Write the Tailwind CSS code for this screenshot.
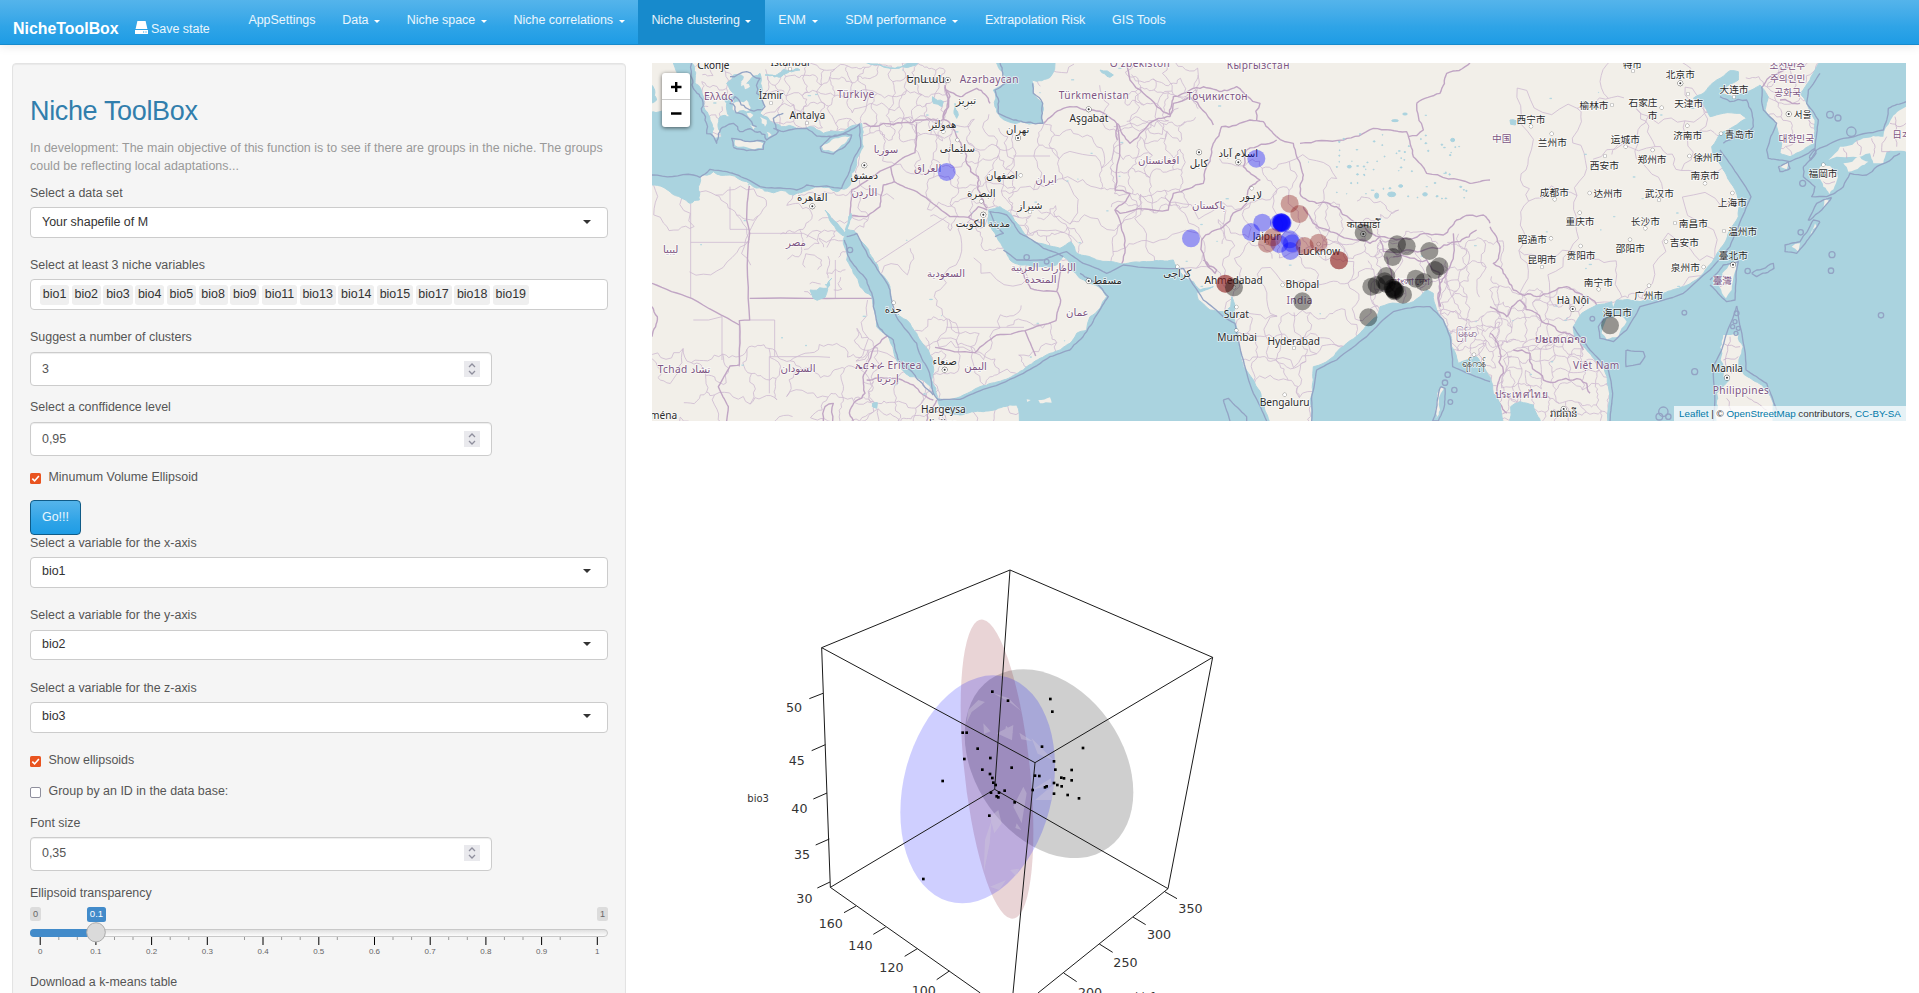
<!DOCTYPE html>
<html lang="en">
<head>
<meta charset="utf-8">
<title>NicheToolBox</title>
<script src="https://cdn.jsdelivr.net/npm/@tailwindcss/browser@4"></script>
</head>
<body class="h-[993px] w-[1919px] overflow-hidden bg-white font-['Liberation_Sans',sans-serif] text-[12.45px] leading-[18px] text-[#555555]">

<nav class="relative flex h-[45px] items-start border-b border-[#178acc] bg-linear-to-b from-[#54b4eb] via-[#2fa4e7] via-60% to-[#1d9ce5] text-white/90 shadow-[0_1px_10px_rgba(0,0,0,0.1)]">
  <div class="flex w-[235px] shrink-0 pl-[13px] pt-[20px]">
    <span class="w-[122px] text-[15.9px] font-bold text-white">NicheToolBox</span>
    <span class="flex gap-[3px]">
      <svg class="mt-[1px] h-[13px] w-[13px]" viewBox="0 0 13 13" fill="#fff"><path d="M2.4 0h8.2L12.4 8H.6z"/><path fill-rule="evenodd" d="M0 9h13v4H0zM8 10.6v1h1.2v-1zM10.4 10.6v1h1.2v-1z"/></svg>
      <span>Save state</span>
    </span>
  </div>
  <ul class="flex h-[44px]">
    <li class="px-[13.4px] pt-[11px]">AppSettings</li>
    <li class="flex px-[13.4px] pt-[11px]">Data<i class="ml-[5.5px] mt-[9px] h-0 w-0 border-x-[3.5px] border-t-[3.5px] border-x-transparent border-t-white"></i></li>
    <li class="flex px-[13.4px] pt-[11px]">Niche space<i class="ml-[5.5px] mt-[9px] h-0 w-0 border-x-[3.5px] border-t-[3.5px] border-x-transparent border-t-white"></i></li>
    <li class="flex px-[13.4px] pt-[11px]">Niche correlations<i class="ml-[5.5px] mt-[9px] h-0 w-0 border-x-[3.5px] border-t-[3.5px] border-x-transparent border-t-white"></i></li>
    <li class="flex h-[45px] bg-[#178acc] px-[13.4px] pt-[11px]">Niche clustering<i class="ml-[5.5px] mt-[9px] h-0 w-0 border-x-[3.5px] border-t-[3.5px] border-x-transparent border-t-white"></i></li>
    <li class="flex px-[13.6px] pt-[11px]">ENM<i class="ml-[6px] mt-[9px] h-0 w-0 border-x-[3.5px] border-t-[3.5px] border-x-transparent border-t-white"></i></li>
    <li class="flex px-[13.6px] pt-[11px]">SDM performance<i class="ml-[6px] mt-[9px] h-0 w-0 border-x-[3.5px] border-t-[3.5px] border-x-transparent border-t-white"></i></li>
    <li class="px-[13.4px] pt-[11px]">Extrapolation Risk</li>
    <li class="px-[13.4px] pt-[11px]">GIS Tools</li>
  </ul>
</nav>

<div class="flex items-start gap-[26px] pl-3 pt-[18px]">
  <aside class="flex h-[960px] w-[614px] shrink-0 flex-col rounded border border-[#e3e3e3] bg-[#f5f5f5] px-[17px] pt-[31px] shadow-[inset_0_1px_1px_rgba(0,0,0,0.05)]">
    <h2 class="h-[44px] text-[27px] leading-[33px] tracking-[-0.35px] text-[#317eac]">Niche ToolBox</h2>
    <p class="h-[45px] tracking-[0.02px] text-[#999999]">In development: The main objective of this function is to see if there are groups in the niche. The groups<br>could be reflecting local adaptations...</p>

    <label>Select a data set</label>
    <div class="mt-[5px] flex h-[31px] items-center justify-between rounded border border-[#cccccc] bg-white pb-[2px] pl-[11px] pr-[16px] text-[#333333]"><span>Your shapefile of M</span><i class="h-0 w-0 border-x-4 border-t-4 border-x-transparent border-t-[#333333]"></i></div>

    <label class="mt-[18px]">Select at least 3 niche variables</label>
    <div class="mt-[5px] flex h-[31px] gap-[2.6px] rounded border border-[#cccccc] bg-white pl-[9px] pt-[5px] text-[#333333]">
      <span class="h-[20px] rounded-[3px] bg-[#efefef] px-[2.8px]">bio1</span><span class="h-[20px] rounded-[3px] bg-[#efefef] px-[2.8px]">bio2</span><span class="h-[20px] rounded-[3px] bg-[#efefef] px-[2.8px]">bio3</span><span class="h-[20px] rounded-[3px] bg-[#efefef] px-[2.8px]">bio4</span><span class="h-[20px] rounded-[3px] bg-[#efefef] px-[2.8px]">bio5</span><span class="h-[20px] rounded-[3px] bg-[#efefef] px-[2.8px]">bio8</span><span class="h-[20px] rounded-[3px] bg-[#efefef] px-[2.8px]">bio9</span><span class="h-[20px] rounded-[3px] bg-[#efefef] px-[2.8px]">bio11</span><span class="h-[20px] rounded-[3px] bg-[#efefef] px-[2.8px]">bio13</span><span class="h-[20px] rounded-[3px] bg-[#efefef] px-[2.8px]">bio14</span><span class="h-[20px] rounded-[3px] bg-[#efefef] px-[2.8px]">bio15</span><span class="h-[20px] rounded-[3px] bg-[#efefef] px-[2.8px]">bio17</span><span class="h-[20px] rounded-[3px] bg-[#efefef] px-[2.8px]">bio18</span><span class="h-[20px] rounded-[3px] bg-[#efefef] px-[2.8px]">bio19</span>
    </div>

    <label class="mt-[18px]">Suggest a number of clusters</label>
    <div class="mt-[6px] flex h-[34px] w-[462px] items-center justify-between rounded border border-[#cccccc] bg-white pb-px pl-[11px] pr-[11px] shadow-[inset_0_1px_1px_rgba(0,0,0,0.075)]"><span>3</span>
      <svg class="h-[16px] w-[16px] bg-[#e9e9ed]" viewBox="0 0 16 16" fill="none" stroke="#8f8f9d" stroke-width="1.3"><path d="M5 6l3-3 3 3M5 10l3 3 3-3"/></svg></div>

    <label class="mt-[12px]">Select a conffidence level</label>
    <div class="mt-[6px] flex h-[34px] w-[462px] items-center justify-between rounded border border-[#cccccc] bg-white pb-px pl-[11px] pr-[11px] shadow-[inset_0_1px_1px_rgba(0,0,0,0.075)]"><span>0,95</span>
      <svg class="h-[16px] w-[16px] bg-[#e9e9ed]" viewBox="0 0 16 16" fill="none" stroke="#8f8f9d" stroke-width="1.3"><path d="M5 6l3-3 3 3M5 10l3 3 3-3"/></svg></div>

    <div class="mt-[12px] flex h-[18px] gap-[7.5px]"><svg class="mt-[5px] h-[11px] w-[11px]" viewBox="0 0 11 11"><rect width="11" height="11" rx="1.6" fill="#e95420"/><path d="M2.3 5.6l2.3 2.3 4.3-5" fill="none" stroke="#fff" stroke-width="1.6"/></svg><span>Minumum Volume Ellipsoid</span></div>

    <button class="mt-[14px] h-[35px] w-[51px] shrink-0 rounded border border-[#105b87] bg-linear-to-b from-[#54b4eb] via-[#2fa4e7] via-60% to-[#1d9ce5] pb-[1px] text-white/90">Go!!!</button>

    <label class="-mt-[1px]">Select a variable for the x-axis</label>
    <div class="mt-[5px] flex h-[31px] items-center justify-between rounded border border-[#cccccc] bg-white pb-[3px] pl-[11px] pr-[16px] text-[#333333]"><span>bio1</span><i class="h-0 w-0 border-x-4 border-t-4 border-x-transparent border-t-[#333333]"></i></div>
    <label class="mt-[18px]">Select a variable for the y-axis</label>
    <div class="mt-[6px] flex h-[30px] items-center justify-between rounded border border-[#cccccc] bg-white pb-[3px] pl-[11px] pr-[16px] text-[#333333]"><span>bio2</span><i class="h-0 w-0 border-x-4 border-t-4 border-x-transparent border-t-[#333333]"></i></div>
    <label class="mt-[19px]">Select a variable for the z-axis</label>
    <div class="mt-[5px] flex h-[31px] items-center justify-between rounded border border-[#cccccc] bg-white pb-[3px] pl-[11px] pr-[16px] text-[#333333]"><span>bio3</span><i class="h-0 w-0 border-x-4 border-t-4 border-x-transparent border-t-[#333333]"></i></div>

    <div class="mt-[18px] flex h-[18px] gap-[7.5px]"><svg class="mt-[5px] h-[11px] w-[11px]" viewBox="0 0 11 11"><rect width="11" height="11" rx="1.6" fill="#e95420"/><path d="M2.3 5.6l2.3 2.3 4.3-5" fill="none" stroke="#fff" stroke-width="1.6"/></svg><span>Show ellipsoids</span></div>
    <div class="mt-[13px] flex h-[18px] gap-[7.5px]"><span class="mt-[5px] h-[11px] w-[11px] rounded-[2px] border border-[#8f8f9d] bg-white"></span><span>Group by an ID in the data base:</span></div>

    <label class="mt-[14px]">Font size</label>
    <div class="mt-[5px] flex h-[34px] w-[462px] items-center justify-between rounded border border-[#cccccc] bg-white pb-[2px] pl-[11px] pr-[11px] shadow-[inset_0_1px_1px_rgba(0,0,0,0.075)]"><span>0,35</span>
      <svg class="h-[16px] w-[16px] bg-[#e9e9ed]" viewBox="0 0 16 16" fill="none" stroke="#8f8f9d" stroke-width="1.3"><path d="M5 6l3-3 3 3M5 10l3 3 3-3"/></svg></div>

    <label class="mt-[13px]">Ellipsoid transparency</label>
    <svg class="mt-[5px] h-[52px] w-[578px] shrink-0 font-['Liberation_Sans',sans-serif]" viewBox="0 0 578 52" text-anchor="middle">
      <defs><linearGradient id="track" x2="0" y2="1"><stop stop-color="#dedede"/><stop offset="1" stop-color="#fff"/></linearGradient></defs>
      <rect y="0" width="11" height="14" rx="2.5" fill="#dcdcdc"/><text x="5.5" y="9.5" font-size="9.2" fill="#666">0</text>
      <rect x="567" y="0" width="11" height="14" rx="2.5" fill="#dcdcdc"/><text x="572.5" y="9.5" font-size="9.2" fill="#666">1</text>
      <rect x="57" y="0" width="19" height="15" rx="2.5" fill="#428bca"/><text x="66.5" y="9.8" font-size="9.6" fill="#fff">0.1</text>
      <rect x=".5" y="22.5" width="577" height="7" rx="3.5" fill="url(#track)" stroke="#c8c8c8"/>
      <path d="M70 22H4a4 4 0 0 0 0 8h66z" fill="#428bca"/>
      <g id="ticks" font-size="8" fill="#666"></g>
      <ellipse cx="66" cy="25.3" rx="9.3" ry="9.6" fill="#dadada" stroke="#aaa"/>
    </svg>
    <label class="mt-[14px]">Download a k-means table</label>
  </aside>

  <main class="flex w-[1254px] flex-col">
    <section class="relative h-[358px] overflow-hidden">
      <svg id="map" class="block h-[358px] w-[1254px]" viewBox="6 9 3762 1074">
        <rect x="6" y="9" width="3762" height="1074" fill="#f2efe9"/>
        <g id="mesh" fill="none" stroke="#cdb9d0" stroke-width="2.4"></g>
        <g id="borders" fill="none" stroke="#c0a5c4" stroke-width="4.2" stroke-linejoin="round"></g>
        <g id="water" fill="#aad3df" stroke="#aad3df" stroke-width="3"></g>
        <g id="islands" fill="#f2efe9"></g>
        <g id="maritime" fill="none" stroke="#93a3c4" stroke-width="4" stroke-linejoin="round"></g>
        <g id="labels" text-anchor="middle" stroke="#fff" stroke-opacity=".7" stroke-width="5" paint-order="stroke" stroke-linejoin="round" style="font-family:'Noto Sans','Noto Sans CJK SC','DejaVu Sans',sans-serif"></g>
        <g id="pins"></g>
      </svg>
      <div class="absolute left-[10px] top-[10px] flex h-[54px] w-[28px] flex-col rounded-[3px] bg-white shadow-[0_1px_4px_rgba(0,0,0,0.6)]">
        <svg viewBox="0 0 28 54" stroke="#000" stroke-width="2.4"><path d="M9 14h10.5M14.2 9v10M9 40.5h10.5"/><path d="M0 26.5h28" stroke="#ccc" stroke-width="1"/></svg>
      </div>
      <div class="absolute bottom-0 right-0 flex h-[15px] w-[232px] items-center justify-center whitespace-pre bg-white/70 text-[9.8px] leading-[15px] text-[#333333]"><span class="text-[#0078a8]">Leaflet</span> | © <span class="text-[#0078a8]">OpenStreetMap</span> contributors, <span class="text-[#0078a8]">CC-BY-SA</span></div>
    </section>

    <svg class="ml-[78px] mt-[129px] h-[443px] w-[520px]" viewBox="0 0 1560 1329">
      <g fill-opacity=".19">
        <ellipse rx="1" ry="1" fill="#000" transform="matrix(253 86 0 270 957 641)"/>
        <ellipse rx="1" ry="1" fill="#8b1d27" transform="matrix(109 189 0 407 801 657.5)"/>
        <ellipse rx="1" ry="1" fill="#00f" transform="matrix(232 -69 0 335 743 718)"/>
      </g>
      <g fill="#d0c8dc" fill-opacity=".4">
        <path d="M760 520l22 24-20 8zM800 550l50-25-4 46zM828 527l22 22-26-2zM868 548l40 26-34-6zM905 565l66 66-48-20zM790 430l45 14 40 40-34-26zM715 480l30-30 20 6-40 30-15 32zM780 800l25-20 10 40-22 30zM765 870l20-60-6 70-18 90zM850 770l30-60 10 20-15 90zM840 960l28-4-10 22zM780 1010l48-20-20 30zM915 750l60-50-10 50zM905 720l58-35 0 20zM860 820l14 20-18-6z"/>
      </g>
      <path fill="none" stroke="#1a1a1a" stroke-width="3" d="M275 293L840 60l608 262-134 694-520-298 46-658M275 293l26 719 493-294M275 293l640 345 533-316M915 638l-66 691M301 1012l450 317M1314 1016l-390 313M238 446l41-16M245 602l41-18M250 747l41-18M257 885l41-18M262 1014l38-18M342 1088l36-20M430 1153l37-22M524 1219l38-23M620 1289l38-26M1304 1025l37 21M1209 1101l38 23M1108 1182l40 25M1001 1269l39 26"/>
      <g id="points" fill="#000"></g>
      <g fill="#333" style="font-family:'DejaVu Sans',sans-serif" font-size="38">
        <text x="168" y="487">50</text><text x="176" y="644">45</text><text x="184" y="790">40</text><text x="192" y="928">35</text><text x="199" y="1058">30</text>
        <text x="266" y="1134">160</text><text x="355" y="1200">140</text><text x="448" y="1267">120</text><text x="545" y="1336">100</text>
        <text x="1345" y="1089">350</text><text x="1251" y="1168">300</text><text x="1150" y="1252">250</text><text x="1044" y="1341">200</text>
        <text x="52" y="757" font-size="30">bio3</text><text x="1216" y="1350" font-size="30">bio1</text>
      </g>
    </svg>
  </main>
</div>

<script>
const $ = id => document.getElementById(id);
let seed = 7;
const rnd = () => (seed = (seed * 16807) % 2147483647) / 2147483647;

// Midpoint displacement gives straight segments a natural coastline look.
function rough(pts, amp, depth) {
  for (let d = 0; d < depth; d++) {
    const out = [pts[0]];
    for (let i = 1; i < pts.length; i++) {
      const [ax, ay] = pts[i - 1], [bx, by] = pts[i];
      const len = Math.hypot(bx - ax, by - ay), k = (rnd() - .5) * amp * (len > 14 ? 1 : 0);
      if (len > 14) out.push([(ax + bx) / 2 - (by - ay) * k, (ay + by) / 2 + (bx - ax) * k]);
      out.push([bx, by]);
    }
    pts = out;
  }
  return pts;
}
const parse = (s, dx = 0) => s.trim().split(/\s+/).map(p => { const [x, y] = p.split(',').map(Number); return [x + dx, y]; });
const line = (s, dx, amp, closed) => {
  const p = parse(s, dx); if (closed) p.push(p[0]);
  return '<path d="M' + rough(p, amp, 3).map(q => q[0].toFixed(1) + ' ' + q[1].toFixed(1)).join('L') + '"/>';
};

// Province mesh: [x0, y0, x1, y1, cell size, density]
let m = '';
for (const [x0, y0, x1, y1, c, dens] of [
  [150,9,250,200,34,.8],[340,20,880,190,42,.85],[640,190,830,370,70,.5],[840,180,1060,460,62,.75],[1060,200,1400,470,90,.7],
  [1180,9,1560,150,90,.55],[1430,60,1640,170,42,.7],[1400,180,1560,420,52,.75],[1400,440,1680,640,105,.6],[1690,330,2000,520,85,.7],
  [1760,560,2180,800,105,.7],[1740,760,2060,1080,75,.65],[1990,440,2230,540,48,.65],[2180,540,2420,760,66,.75],
  [2390,560,2500,900,50,.8],[2420,800,2560,1060,44,.8],[2530,700,2790,860,44,.85],[2560,860,2880,1080,40,.85],
  [2590,140,3230,700,140,.6],[2880,9,3150,320,115,.5],[3310,9,3500,300,60,.7],
  [650,520,1140,860,120,.5],[760,800,1150,1020,75,.65],[6,880,620,1083,72,.75],[620,820,860,1083,62,.7],[400,400,640,560,60,.65],[10,390,300,540,105,.5],
  [470,520,560,700,36,.5],[1000,460,1260,560,60,.6],[880,1040,1100,1083,60,.7]]) {
  const nx = Math.ceil((x1 - x0) / c), ny = Math.ceil((y1 - y0) / c), g = [];
  for (let j = 0; j <= ny; j++) { g.push([]); for (let i = 0; i <= nx; i++) g[j].push([x0 + (i + (rnd() - .5) * .8) * c, y0 + (j + (rnd() - .5) * .8) * c]); }
  for (let j = 0; j <= ny; j++) for (let i = 0; i <= nx; i++) {
    for (const q of [i < nx && g[j][i + 1], j < ny && g[j + 1][i]])
      if (q && rnd() < dens) m += '<path d="M' + rough([g[j][i], q], .55, 3).map(v => v[0].toFixed(1) + ' ' + v[1].toFixed(1)).join('L') + '"/>';
  }
}
m += '<path d="M122 430V715M122 547H298M240 380V508H298M300 520H460L500 540M556 600V715M358 1000V890H504L540 892M300 780H374V888M268 795V920M890 802H1122M660 620L890 470M600 470H650M130 780H176L216 770V900M1090 288H1200"/>';
$('mesh').innerHTML = m;

const W = 1260, E = 2520;
$('borders').innerHTML = [
  ['6,670 125,715 268,795',0,.04],['298,378 290,480 299,520 299,780 268,782 268,915 240,918 205,980 235,1040 230,1083',0,.05],
  ['299,715 668,715',0,.01],['6,740 22,770 6,830',0,.2],['640,190 700,190 760,188 810,180 880,178 890,100 885,80',0,.3],
  ['800,190 795,278 722,320 605,390 600,465',0,.12],['722,320 733,365 700,375 690,440 650,470 600,466',0,.12],
  ['733,365 800,395 900,470 955,472 985,440 1012,450',0,.08],['955,472 1000,490',0,.1],
  ['880,178 920,230 950,310 985,350 1000,420 1012,445',0,.35],['890,90 930,110 980,85 1020,130',0,.3],['880,178 900,110 885,75',0,.3],
  ['1110,620 1142,685 1220,695 1230,640 1240,615',0,.1],['1222,695 1232,720 1218,782 1125,812 1040,825 975,878 855,862',0,.1],['1125,812 1157,888',0,.05],
  ['668,715 720,820 665,880 650,930 640,960 645,1000 600,1050 610,1083',0,.3],['650,960 720,955 790,975 850,1020',0,.2],['520,1083 525,1040 550,1030 548,1083',0,.3],['860,1020 830,1083',0,.3],
  ['1180,190 1240,145 1280,140 1330,150 1400,190 1402,240',0,.2],['1402,190 1440,250 1525,175 1560,170 1570,130 1620,110 1690,195',0,.25],
  ['1430,9 1440,60 1520,140 1560,165',0,.2],['1560,165 1570,110 1620,90 1700,90 1760,80 1830,130 1820,180',0,.35],
  ['1400,190 1395,390 1440,400 1395,450 1410,460 1555,450 1570,400 1660,370 1670,320 1690,250 1715,200 1800,180 1840,185 1880,230',0,.2],
  ['1415,612 1420,520 1395,450',0,.2],['1660,600 1700,630 1695,640 1655,540 1720,500 1790,430 1800,380 1830,360 1780,320 1790,270 1880,240',0,.25],
  ['1880,230 1930,250 1940,290 1960,345 1950,400 2000,430 2060,440 2150,510 2190,530 2240,540 2290,535 2380,525 2420,480 2500,465 2520,490',0,.25],
  ['1960,440 1990,490 2060,520 2160,550 2190,530',0,.2],['1950,250 2080,240 2170,205 2270,215 2290,290 2330,340 2460,370 2520,360',0,.15],['2300,130 2370,100 2390,40 2460,9',0,.2],['2300,130 2320,210 2275,230',0,.3],
  ['2190,540 2200,575 2280,570 2370,565 2430,545 2480,510',0,.3],['2210,590 2225,640 2240,720',0,.35],['2230,590 2330,600 2370,640 2370,740',0,.35],
  ['2410,520 2400,620 2370,670 2372,740',0,.3],['2520,500 2550,560 2530,610 2560,640 2590,690 2660,710 2750,680 2800,710 2840,735',0,.35],
  ['2520,740 2570,770 2610,720 2660,760 2720,810 2780,830 2800,870',0,.35],['2520,820 2550,870 2560,940 2540,1000 2570,1060',0,.3],['2590,870 2640,880 2680,960 2770,960 2810,970 2820,1000',0,.35],
  ['3330,85 3360,50 3420,20 3440,9',0,.2],['3390,120 3450,130',0,.3]
].map(a => line(...a)).join('');

$('water').innerHTML = [
  ['70,9 125,9 135,70 160,110 165,150 180,180 190,235 215,230 210,170 240,170 230,130 215,110 250,110 230,70 250,45 280,50 270,80 300,60 330,40 335,80 340,130 330,160 370,190 395,200 440,205 480,200 520,220 560,215 600,200 635,190 640,260 620,310 605,340 590,385 560,395 510,380 460,395 430,405 380,395 310,380 290,365 240,345 190,335 150,350 145,390 148,420 120,430 95,415 60,395 -20,370 -20,155 40,150 60,120 90,60',0,.3],
  ['0,70 14,90 20,120 0,130',0,.3],['345,45 400,28 450,30 400,44',0,.4],['640,5 810,5 780,20 720,24 680,14',0,.3],
  ['1040,9 1070,60 1030,90 1035,140 1050,170 1100,190 1150,190 1180,190 1178,130 1150,100 1145,60 1175,62 1205,45 1215,9',0,.3],
  ['525,450 550,480 585,520 580,528 545,490',0,.2],['603,460 598,490 590,512 586,510 596,470',0,.2],
  ['590,508 612,512 640,550 665,590 690,640 720,680 735,760 770,780 800,820 835,870 850,920 845,960 862,1012 850,1000 820,960 780,950 740,900 722,850 715,830 680,800 675,760 665,710 630,680 610,640 590,600 580,550',0,.2],
  ['862,1015 900,1020 940,1005 990,980 1060,960 1120,930 1170,895 1200,880 1260,850 1280,820 1310,810 1320,770 1350,745 1370,710 1345,680 1310,665 1290,655 1265,630 1255,600 1240,590 1220,615 1180,620 1110,615 1095,610 1080,600 1065,570 1040,530 1015,490 1015,450 1050,440 1080,460 1110,500 1140,540 1190,555 1230,565 1262,545 1280,580 1340,600 1415,612 1500,605 1570,600 1580,620 1600,650 1630,665 1650,690 1690,680 1640,697 1645,720 1680,750 1720,755 1742,740 1745,710 1756,740 1755,790 1765,850 1780,920 1810,960 1840,1030 1860,1090 1640,1140 1105,1140 1100,1035 1060,1040 1000,1055 930,1065 890,1060 870,1040',0,.14],
  ['1980,1140 1980,1020 1990,960 1990,920 2020,910 2050,890 2090,850 2130,820 2180,770 2190,740 2240,730 2290,725 2330,690 2350,700 2360,750 2385,790 2400,820 2405,860 2425,910 2450,900 2480,890 2500,920 2520,950 2530,1000 2550,1030 2560,1140 2270,1200',0,.14],
  ['2578,1090 2582,1040 2610,1025 2650,1035 2672,1090',0,.2],
  ['610,115 640,100 680,60 720,32 745,35 745,60 700,90 690,100 730,110 760,100 810,75 835,110 825,150 850,180 860,200 875,250 870,280 900,290 940,270 975,250 975,180 950,130 930,100 960,60 990,5 1255,-150 1500,-100 1500,1200 860,1200 850,1030 820,980 770,950 740,935 680,1000 680,1150 355,1150 355,980 340,920 290,870 255,830 250,800 275,760 320,735 365,725 370,745 380,720 450,725 520,700 580,680 630,650 670,600 695,560 720,510 745,470 750,430 730,380 700,330 670,290 665,260 690,220 730,200 770,175 750,160 700,160 660,170 640,130',E,.12],
  ['60,180 78,182 76,195 62,193',E,.3],['848,110 880,125 875,140 850,130',0,.4],['1350,30 1390,45 1380,52',0,.4],['915,130 925,165 920,175 912,160',0,.3],['480,690 520,685 545,655 530,700 490,715',0,.5],['668,1030 682,1028 680,1045 667,1040',0,.4]
].map(([s, dx, a]) => line(s, dx, a, true)).join('');
let lakes = '';
for (let i = 0; i < 60; i++) { const x = 2050 + rnd() * 400, y = 220 + rnd() * 200; lakes += `<ellipse cx="${x}" cy="${y}" rx="${.5 + rnd() * 3}" ry="${.5 + rnd() * 1.6}"/>`; }
for (const [x, y, a, b] of [[2225,403,12,7],[2180,407,6,8],[2252,378,6,4],[2235,182,10,3],[2325,403,7,5],[2265,162,7,3],[2098,320,6,4],[2408,240,6,5]]) lakes += `<ellipse cx="${x}" cy="${y}" rx="${a}" ry="${b}"/>`;
for (let i = 0; i < 110; i++) { const x = 100 + rnd() * 3100, y = 20 + rnd() * 1000; lakes += `<ellipse cx="${x}" cy="${y}" rx="${1 + rnd() * 4}" ry=".6" stroke-width="2"/>`; }
$('water').innerHTML += lakes;

$('islands').innerHTML = [
  ['255,240 300,246 340,250 335,265 290,262 255,256',0,.3],['515,258 545,240 600,230 575,255 550,275 520,270',0,.2],['250,130 290,120 300,150 280,150 260,160',0,.5],['290,160 310,165 300,175',0,.5],['330,170 350,180 345,200 335,190',0,.5],['300,195 320,200 310,210',0,.5],['272,70 300,80 285,88',0,.5],['350,215 365,225 355,232',0,.5],
  ['340,800 350,775 390,765 410,785 385,830 350,838 335,820',E,.2],['740,602 722,608 697,640 688,680 708,715 725,690',E,.15],
  ['700,825 745,825 758,860 745,900 740,930 770,950 790,990 740,975 700,950 692,900',E,.3],['690,1000 720,1010 740,1040 720,1083 680,1083',E,.4],['750,1000 800,985 840,1030 845,1083 790,1060',E,.4],['740,1040 770,1050 780,1083 750,1083',E,.4],
  ['990,320 1020,318 1040,335 1038,370 1018,402 1000,380 985,345',E,.3],['1015,300 1050,260 1120,235 1180,230 1202,180 1248,140 1275,275 1190,275 1180,310 1150,310 1140,280 1090,290 1040,290',E,.2],['1060,310 1110,290 1135,305 1110,320 1075,335',E,.3],['865,318 895,308 890,328',E,.3],
  ['2370,980 2382,985 2370,1050 2358,1075 2362,1020',0,.4],['1165,1020 1200,1012 1205,1028 1170,1030',0,.2],['1130,1018 1142,1020 1132,1026',0,.2],['1005,415 1020,425 1000,445',E,.3],['975,490 980,500 960,525',E,.3],['905,560 930,550 925,575',E,.3]
].map(([s, dx, a]) => line(s, dx, a, true)).join('') +
  '<g fill="none" stroke="#c9b3cc" stroke-width="2.4">' + ['1060,265 1070,295','1100,240 1110,285','1145,235 1150,290','1190,230 1175,275 1200,275','1200,190 1230,200 1248,190','1215,170 1220,260','1000,335 1035,350','1000,365 1035,365','700,850 750,860','700,900 745,890','720,830 725,940','700,645 725,660','690,680 720,670','710,1015 730,1060','770,1010 830,1050'].map(s => line(s, E, .4)).join('') + '</g>';

const rings = [[1020,164,10],[1044,174,9],[938,370,9],[932,517,8],[1026,584,9],[1023,632,8],[773,633,8],[583,758,7],[614,935,9],[1173,766,8],[307,776,7],[520,1055,14],[508,1070,10],[535,1070,8],[1084,215,14],[740,760,7],[735,785,6],[728,800,6],[745,805,6],[738,820,6]]
  .map(([x, y, r]) => `<circle cx="${x + E}" cy="${y}" r="${r}"/>`).join('') + [[2393,944,8],[2385,968,8],[2413,990,8],[2401,1026,7],[600,570,8],[1130,592,8],[1190,605,7]].map(([x, y, r]) => `<circle cx="${x}" cy="${y}" r="${r}"/>`).join('');
$('maritime').innerHTML = rings + [
  ['6,345 130,345 150,352 180,328 230,335 300,362 330,380 400,385 440,390 470,375 530,378 575,385 600,330 632,260 628,192 560,228 500,228 470,205 400,215 370,205',0,.12],
  ['125,9 128,60 150,110 165,180 200,250 225,200 250,190 270,215 330,215 350,240 385,215 370,175 400,160',0,.4],['250,260 245,235 300,245 345,245 340,268 290,272 250,262',0,.2],['510,262 540,232 605,225 585,260 550,282 515,275 510,262',0,.2],['240,50 290,35 330,55 320,100 345,140 300,150 255,110 240,130 290,170 320,200',0,.5],
  ['590,530 620,520 655,590 690,640 720,690 735,760 760,800 800,850 830,920 850,1000 865,1020',0,.1],['583,540 600,600 650,660 670,740 685,800 730,840 745,900 780,930 820,975 850,1005',0,.15],
  ['865,1020 930,1018 1010,985 1120,940 1200,890 1260,870',0,.06],['1035,530 1060,520 1030,480 1020,455 1070,465 1110,520 1180,565 1240,590',0,.1],['1060,570 1100,600 1180,600 1250,575 1300,610 1370,640 1420,615 1600,625 1660,720 1720,770 1755,790 1780,900 1810,1000 1850,1083',0,.05],
  ['1260,870 1310,815 1340,765 1375,710 1350,680 1290,640',0,.15],['1985,1083 1985,1010 2000,930 2060,900 2150,830 2230,755 2300,740 2340,740 2380,780 2400,830 2408,920 2520,965',0,.06],['1720,1020 1735,1015 1790,1070 1790,1090',0,.05],['1720,1020 1740,1083',0,.05],
  ['1050,9 1065,70 1035,90 1045,160 1090,180 1150,190 1178,190 1178,130 1150,100 1148,70',0,.2],
  ['690,270 760,370 783,410 745,500 720,560 660,630 580,700 450,740 410,810 370,845 330,835 325,800 345,770',E,.05],['690,110 720,125 770,120 790,200 760,220 700,250',E,.2],['660,660 700,615 745,605 738,650 735,720 710,725 660,675',E,.08],
  ['740,738 710,820 690,880 670,920 670,1083',E,.06],['740,738 760,850 768,930 830,970 860,1050',E,.06],['250,800 300,870 355,930 368,1000 360,1083',E,.06],['410,870 460,875 465,890 450,912 408,920 408,870',E,.08],
  ['815,80 820,150 860,190 830,270 835,295 900,305 935,290 975,265 985,180 950,130 955,90 990,40',E,.1],['865,320 895,305 900,325 870,335 865,320',E,.2],['940,320 980,270 1060,235 1180,210 1195,145 1248,125',E,.1],['940,320 940,350 975,380 965,410 1010,410 1060,380 1080,340 1130,345 1160,320 1230,280',E,.15],
  ['1025,412 995,450 960,480 955,480 980,430 1025,412',E,.1],['990,485 960,530 920,580 885,575 885,555 930,545 970,480 990,485',E,.1],['785,640 850,610 852,625 800,650 785,640',E,.2],['958,290 975,268 978,280 962,300 958,290',E,.1],
  ['2372,980 2385,985 2380,1050 2365,1083 2348,1083 2362,1020 2372,980',0,.1]
].map(a => line(...a)).join('');

// Labels: [text, x centre, baseline, kind] — c: country, t: town
const L = [];
const add = (dx, rows) => rows.forEach(r => L.push([r[0], r[1] + dx, r[2], r[3] || 't']));
add(0, [['Скопје',190,28],['Istanbul',420,17],['Ελλάς',206,121,'c'],['İzmir',363,118],['Türkiye',618,115,'c'],['Antalya',472,178],['Երևան',827,70],['Azərbaycan',1018,70,'c'],['تبريز',948,132],['هەولێر',878,205],['تهران',1103,220],['سلێمانی',922,275],['سوريا',708,278,'c'],['العراق',833,337,'c'],['دمشق',643,356],['الأردن',643,408,'c'],['اصفهان',1056,357],['ایران',1188,370,'c'],['البصرة',994,412],['شیراز',1140,446],['القاهرة',487,422],['مدينة الكويت',999,502],['مصر',438,558,'c'],['ليبيا',62,578,'c'],['السعودية',888,652,'c'],['الإمارات العربية',1180,632,'c'],['المتحدة',1172,668,'c'],['جدة',730,758],['صنعاء',884,914],['اليمن',977,930,'c'],['Tchad تشاد',102,938,'c'],['السودان',444,937,'c'],['ኤርትራ Eritrea',715,928,'c'],['إرتريا',713,965,'c'],['Hargeysa',880,1060],['Djaména',17,1076],['Jigjiga',880,1100]]);
add(W, [["O'zbekiston",210,21,'c'],['Кыргызстан',565,28,'c'],['Türkmenistan',72,118,'c'],['Тоҷикистон',442,121,'c'],['Aşgabat',57,187],['افغانستان',266,311,'c'],['کابل',387,322],['اسلام آباد',505,292],['پاکستان',416,446,'c'],['لاہور',543,418],['کراچی',322,652],['مسقط',112,673],['عمان',22,768,'c'],['Jaipur',590,539],['काठमाडौँ',880,505],['Lucknow',747,584],['Ahmedabad',491,671],['Bhopal',697,684],['India',689,733,'c'],['Surat',499,774],['Mumbai',501,844],['Hyderabad',671,855],['Bengaluru',644,1038],['বাংলাদেশ',1022,674,'c'],['မြန်မာ',1190,830,'c'],['ရန်ကုန်',1212,920]]);
add(E, [['特市',427,24],['北京市',571,54],['大连市',732,98],['조선민주',892,28,'c'],['주의인민',893,67,'c'],['공화국',893,107,'c'],['榆林市',312,148],['石家庄',459,138],['市',488,177],['天津市',596,142],['서울',938,175],['西宁市',123,188],['济南市',593,236],['青岛市',748,235],['中国',35,246,'c'],['兰州市',187,258],['运城市',406,248],['대한민국',919,245,'c'],['日本',1236,233,'c'],['郑州市',486,308],['徐州市',653,304],['西安市',343,326],['南京市',645,357],['福岡市',999,352],['成都市',193,409],['达州市',354,412],['武汉市',508,410],['上海市',727,437],['重庆市',270,496],['长沙市',466,494],['南昌市',610,502],['昭通市',127,549],['温州市',758,526],['邵阳市',421,577],['吉安市',583,558],['昆明市',156,608],['贵阳市',273,598],['臺北市',730,597],['泉州市',586,633],['南宁市',325,677],['臺灣',697,673,'c'],['Hà Nội',249,731],['广州市',476,717],['海口市',382,769],['ປະເທດລາວ',213,848,'c'],['Việt Nam',319,928,'c'],['Manila',711,937],['ประเทศไทย',94,1013,'c'],['Philippines',753,1003,'c'],['រាជធានី',221,1072]]);
const town = [[420,27],[363,129],[471,189],[948,142],[880,215],[922,240],[1112,346],[994,424],[1140,456],[731,728],[1805,385],[1582,620],[1850,548],[1752,682],[1898,675],[1759,741],[1759,811],[1932,864],[1904,1004],[2006,552],[2472,884]]
  .concat([[429,33],[594,102],[732,111],[366,135],[515,143],[592,197],[123,199],[693,221],[185,221],[407,260],[488,270],[598,288],[345,288],[645,370],[1000,314],[194,418],[299,399],[507,420],[727,399],[269,458],[466,505],[555,489],[183,535],[702,513],[420,539],[528,545],[156,621],[272,558],[641,621],[326,688],[477,677]].map(p => [p[0] + E, p[1]]));
const cap = [[893,60],[643,316],[1104,234],[1000,464],[487,439],[884,929],[1316,148],[1647,277],[1765,307],[1316,663],[2140,522]].concat([[571,70],[896,162],[729,614],[248,747],[711,953],[221,1047]].map(p => [p[0] + E, p[1]]));
$('labels').innerHTML =
  town.map(([x, y]) => `<circle cx="${x}" cy="${y}" r="5" fill="#fff" stroke="#666" stroke-opacity="1" stroke-width="2"/>`).join('') +
  cap.map(([x, y]) => `<circle cx="${x}" cy="${y}" r="7.5" fill="#fff" stroke="#333" stroke-opacity="1" stroke-width="2.5"/><circle cx="${x}" cy="${y}" r="3" fill="#333" stroke="none"/>`).join('') +
  L.map(([t, x, y, k]) => {
    const latin = /^[A-Za-zÀ-ỹА-яҷЁёəΑ-ώ' ]+$/.test(t), arabic = /[\u0600-\u06ff]/.test(t);
    return `<text x="${x}" y="${y}" font-size="${latin ? 30.5 : arabic ? 32 : 29}" fill="${k === 'c' ? '#7d5583' : '#2b2b2b'}"${k === 'c' && latin ? ' letter-spacing="1.2"' : ''}>${t}</text>`;
  }).join('');

const pin = (list, color, o) => list.map(([x, y]) => `<circle cx="${x}" cy="${y}" r="27" fill="${color}" fill-opacity="${o}"/>`).join('');
$('pins').innerHTML =
  pin([[890,336],[1819,296],[1623,535],[1803,516],[1837,488],[1887,489],[1893,486],[1894,488],[1895,487],[1896,491],[1898,489],[1888,552],[1919,538],[1926,550],[1921,573]], '#00f', .37) +
  pin([[1919,431],[1948,462],[1851,551],[1868,532],[1964,558],[2006,548],[2067,601],[2067,601],[1726,671],[1726,671]], '#8b1a1a', .38) +
  pin([[1752,682],[1957,724],[2141,518],[2241,553],[2270,559],[2228,591],[2338,573],[2368,619],[2355,630],[2297,656],[2321,666],[2209,648],[2164,680],[2180,675],[2204,664],[2210,672],[2228,684],[2230,688],[2232,690],[2234,694],[2236,690],[2259,704],[2155,772],[2880,796]], '#000', .38);

$('points').innerHTML = [[787,425],[834,452],[961,447],[967,485],[698,548],[710,548],[743,596],[703,627],[781,624],[936,590],[1059,594],[845,653],[757,659],[780,672],[787,684],[790,698],[797,705],[824,722],[783,728],[807,728],[800,739],[805,742],[854,757],[778,797],[638,693],[580,987],[972,634],[976,659],[1025,660],[1025,691],[915,677],[928,678],[994,683],[1002,685],[972,699],[982,705],[995,709],[945,712],[950,709],[908,720],[972,731],[1013,735],[1047,745]]
  .map(([x, y]) => `<rect x="${x - 4}" y="${y - 4}" width="8" height="8"/>`).join('');

let tk = '';
for (let i = 0; i <= 30; i++) {
  if ([10, 17, 29].includes(i)) continue;
  const x = 10.2 + i * 18.57, big = i % 3 === 0;
  tk += `<rect x="${(x - .5).toFixed(1)}" y="30" width="1" height="${big ? 8 : 3}" fill="${big ? '#000' : '#999'}"/>`;
  if (big) tk += `<text x="${x}" y="47">${i / 3 % 10 === 0 ? i / 30 : (i / 30).toFixed(1)}</text>`;
}
$('ticks').innerHTML = tk;
</script>
</body>
</html>
